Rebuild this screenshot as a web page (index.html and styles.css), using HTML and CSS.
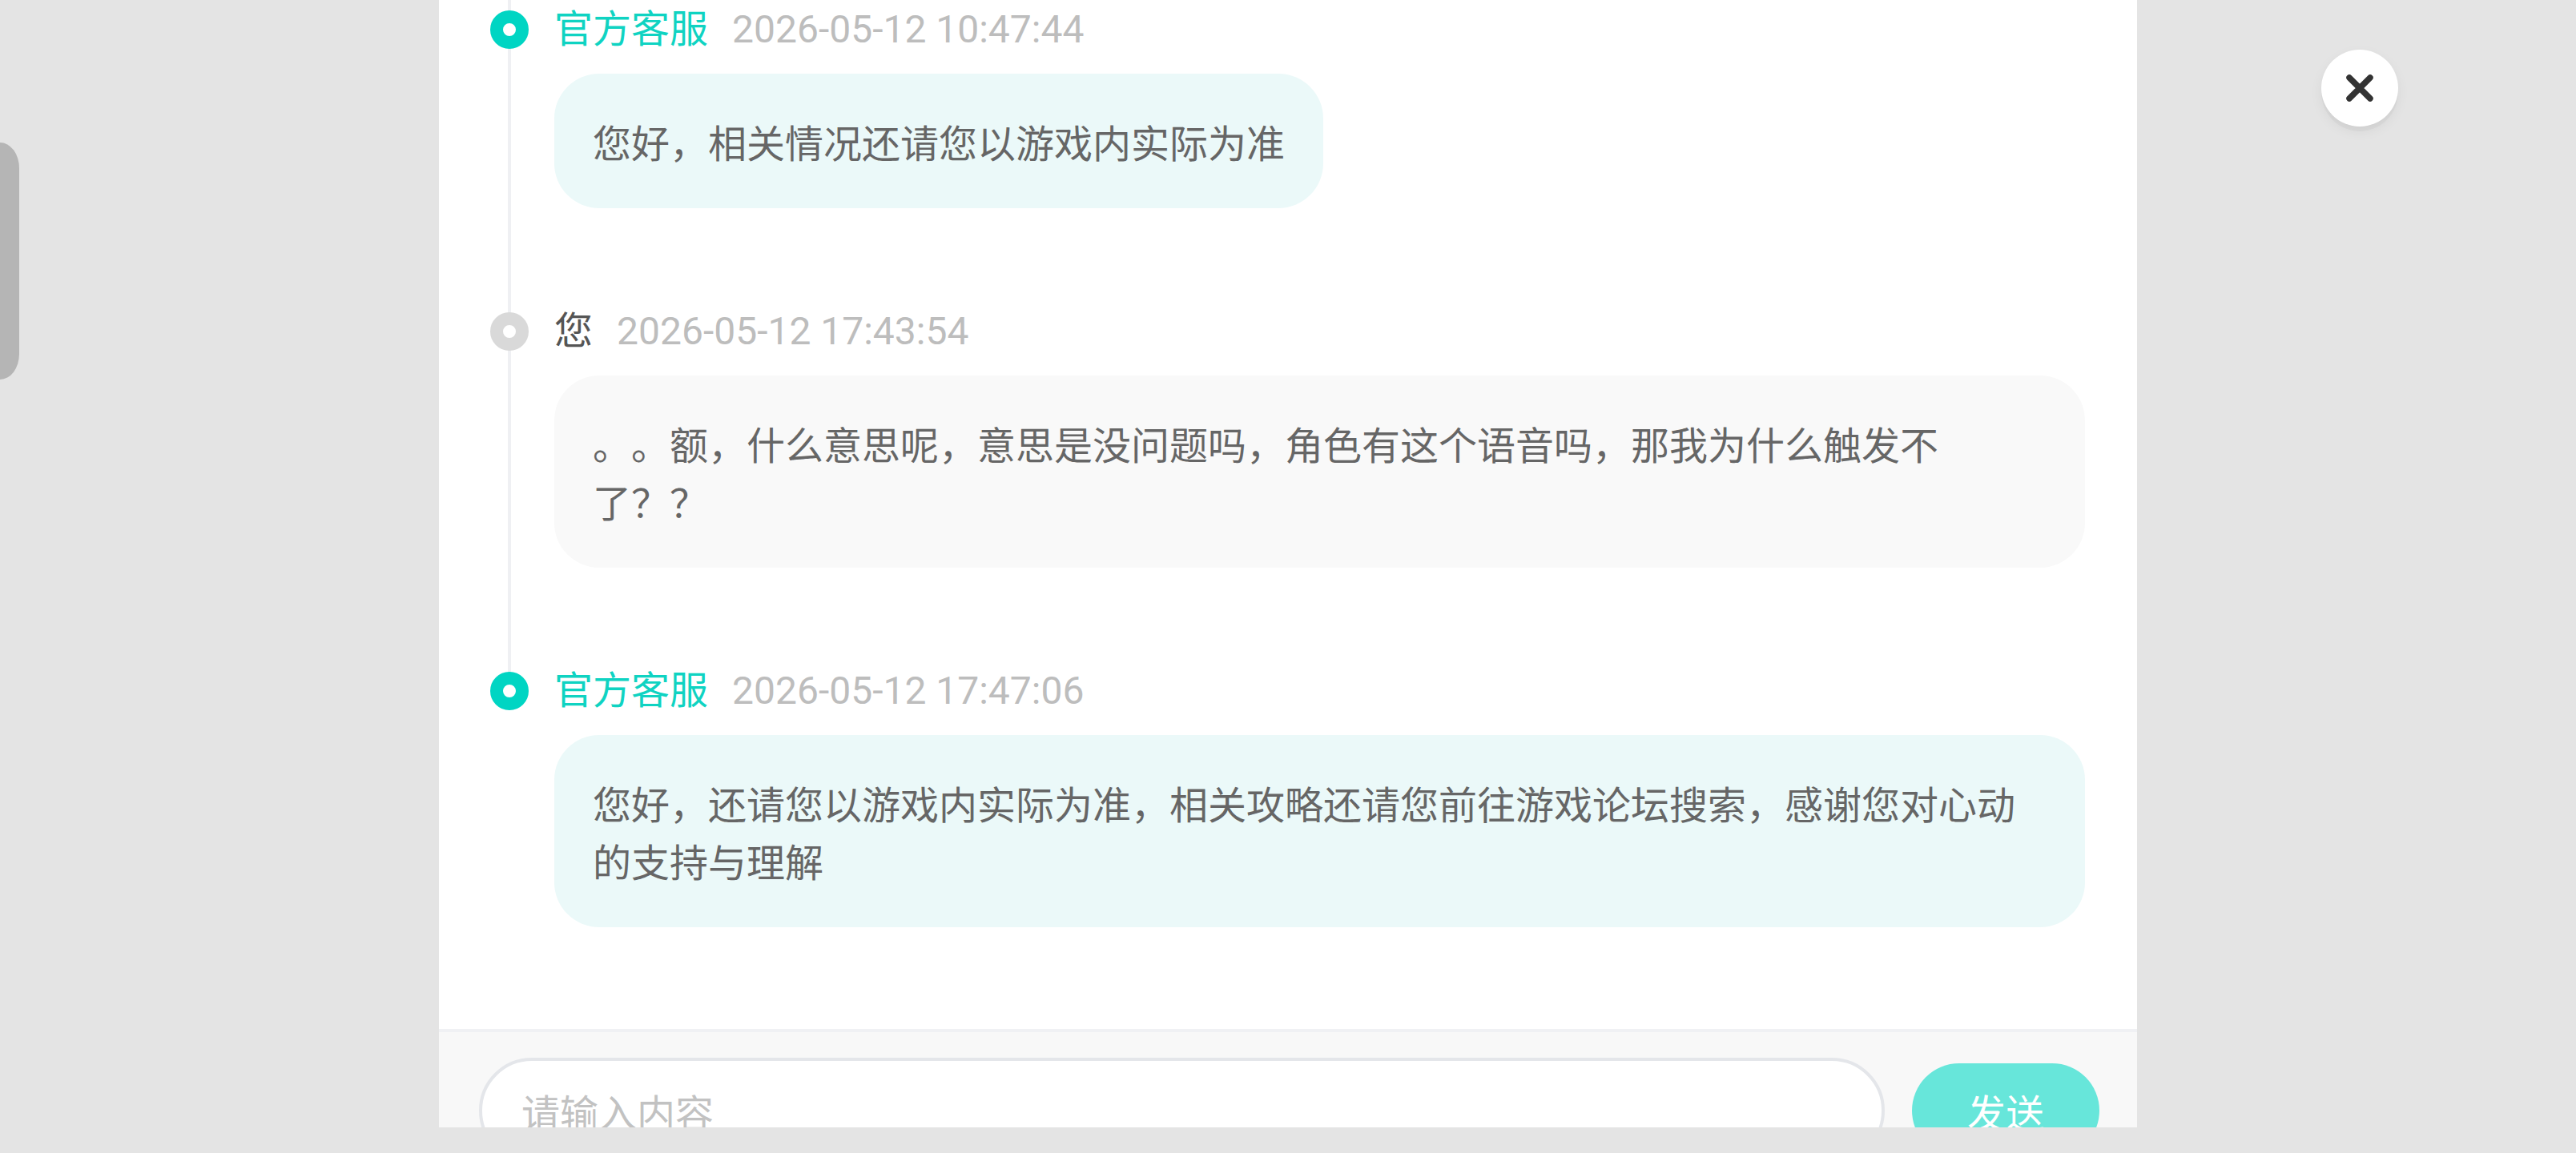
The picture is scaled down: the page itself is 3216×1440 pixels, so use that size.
FILE: index.html
```html
<!DOCTYPE html>
<html lang="zh-CN">
<head>
<meta charset="utf-8">
<title>客服记录</title>
<link rel="stylesheet" href="styles.css">
</head>
<body>
<div class="side-tab"></div>
<div class="panel">
  <div class="list">
    <div class="item">
      <span class="dot dot-staff"></span>
      <div class="head"><span class="name name-staff">官方客服</span><span class="time">2026-05-12 10:47:44</span></div>
      <div class="bubble bubble-staff">您好，相关情况还请您以游戏内实际为准</div>
    </div>
    <div class="item">
      <span class="dot dot-user"></span>
      <div class="head"><span class="name name-user">您</span><span class="time">2026-05-12 17:43:54</span></div>
      <div class="bubble bubble-user">。。额，什么意思呢，意思是没问题吗，角色有这个语音吗，那我为什么触发不了？？</div>
    </div>
    <div class="item last">
      <span class="dot dot-staff"></span>
      <div class="head"><span class="name name-staff">官方客服</span><span class="time">2026-05-12 17:47:06</span></div>
      <div class="bubble bubble-staff">您好，还请您以游戏内实际为准，相关攻略还请您前往游戏论坛搜索，感谢您对心动的支持与理解</div>
    </div>
  </div>
  <div class="footer">
    <div class="input"><span class="placeholder">请输入内容</span></div>
    <div class="send">发送</div>
  </div>
</div>
<div class="close">
  <svg width="34" height="34" viewBox="0 0 34 34"><path d="M4 4 L30 30 M30 4 L4 30" stroke="#333" stroke-width="7.5" stroke-linecap="round" fill="none"/></svg>
</div>
</body>
</html>
```

FILE: styles.css
```css
html, body {
  margin: 0;
  padding: 0;
}
body {
  background: #e4e4e4;
  font-family: Roboto, "Noto Sans CJK SC", sans-serif;
  height: 1440px;
  overflow: hidden;
  text-spacing-trim: space-all;
}
.side-tab {
  position: fixed;
  left: 0;
  top: 178px;
  width: 24px;
  height: 296px;
  background: #b5b5b5;
  border-radius: 0 24px 24px 0 / 0 32px 32px 0;
}
.panel {
  width: 2120px;
  height: 1408px;
  margin: 0 auto;
  background: #ffffff;
  display: flex;
  flex-direction: column;
  overflow: hidden;
}
.list {
  flex: 1;
  padding: 0 65px 0 64px;
}
.item {
  position: relative;
  padding: 0 0 117px 80px;
}
.item::before {
  content: "";
  position: absolute;
  left: 22px;
  top: 0;
  bottom: 0;
  width: 4px;
  background: #eff0f3;
}
.item.last::before {
  bottom: auto;
  height: 36px;
}
.dot {
  position: absolute;
  left: 0;
  top: 13px;
  width: 16px;
  height: 16px;
  border: 16px solid #00d5c3;
  border-radius: 50%;
  background: #ffffff;
  z-index: 1;
}
.dot-user {
  border-color: #d9d9d9;
}
.head {
  display: flex;
  align-items: baseline;
  gap: 30px;
  font-size: 48px;
  line-height: 64px;
  height: 72px;
}
.name {
  font-family: "Noto Sans CJK SC", sans-serif;
}
.name-staff {
  color: #0fd3c2;
}
.name-user {
  color: #555555;
}
.time {
  font-family: Roboto, sans-serif;
  color: #bdbdbd;
}
.bubble {
  width: fit-content;
  max-width: 100%;
  box-sizing: border-box;
  margin-top: 20px;
  padding: 48px;
  border-radius: 56px;
  font-family: "Noto Sans CJK SC", sans-serif;
  font-size: 48px;
  line-height: 72px;
  color: #666666;
  line-break: strict;
}
.bubble-staff {
  background: #ebf9f9;
}
.bubble-user {
  background: #f9f9f9;
}
.footer {
  height: 87px;
  flex: none;
  border-top: 4px solid #f0f1f4;
  background: #f8f8f8;
  padding: 32px 47px 0 50px;
  display: flex;
  align-items: flex-start;
  gap: 34px;
}
.input {
  flex: 1;
  height: 132px;
  box-sizing: border-box;
  border: 4px solid #e4e6ea;
  border-radius: 66px;
  background: #ffffff;
  padding-left: 49px;
  display: flex;
  align-items: center;
}
.placeholder {
  font-family: "Noto Sans CJK SC", sans-serif;
  font-size: 48px;
  color: #c2c2c2;
}
.send {
  margin-top: 7px;
  width: 234px;
  height: 118px;
  border-radius: 59px;
  background: #67e6da;
  color: #ffffff;
  font-family: "Noto Sans CJK SC", sans-serif;
  font-size: 48px;
  display: flex;
  align-items: center;
  justify-content: center;
}
.close {
  position: fixed;
  top: 62px;
  right: 222px;
  width: 96px;
  height: 96px;
  border-radius: 50%;
  background: #ffffff;
  box-shadow: 0 6px 0 rgba(0, 0, 0, 0.035), 0 6px 16px rgba(0, 0, 0, 0.06);
  display: flex;
  align-items: center;
  justify-content: center;
}
```
